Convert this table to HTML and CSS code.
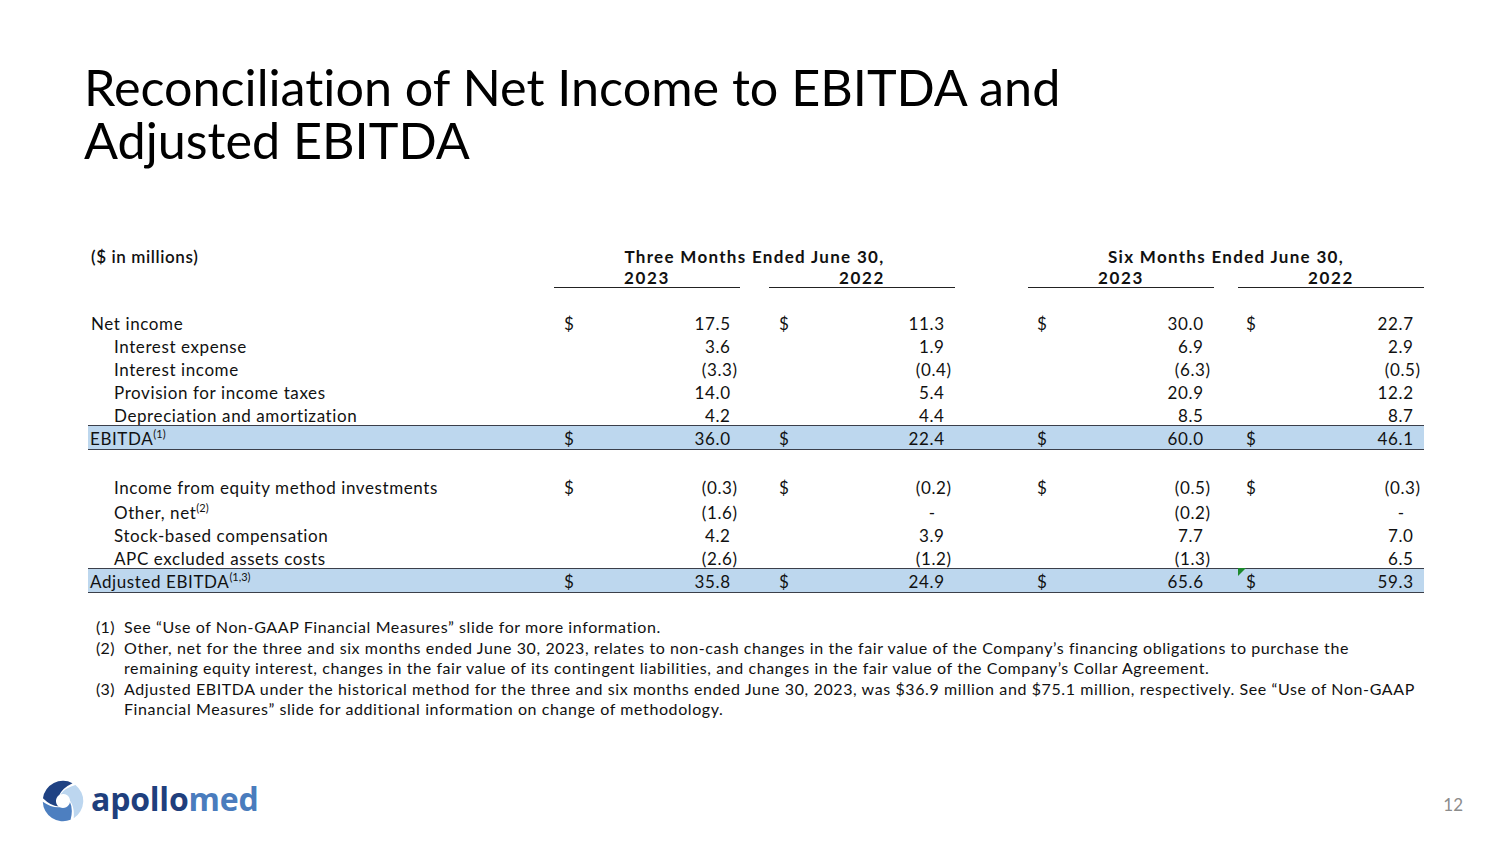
FILE: index.html
```html
<!DOCTYPE html>
<html lang="en">
<head>
<meta charset="utf-8">
<title>Reconciliation of Net Income to EBITDA and Adjusted EBITDA</title>
<link rel="stylesheet" href="styles.css">
</head>
<body>
<div class="slide">
  <h1 class="title"><span class="tline">Reconciliation of Net Income to EBITDA and</span><span class="tline">Adjusted EBITDA</span></h1>

  <div class="tbl">
    <div class="row head">
      <div class="lbl semi">($ in millions)</div>
      <div class="grp grp1">Three Months Ended June 30,</div>
      <div class="grp grp2">Six Months Ended June 30,</div>
    </div>
    <div class="row years">
      <div class="yr c1">2023</div>
      <div class="yr c2">2022</div>
      <div class="yr c3">2023</div>
      <div class="yr c4">2022</div>
    </div>

    <div class="row first">
      <div class="lbl">Net income</div>
      <div class="cell c1"><span>$</span><span class="num">17.5</span></div>
      <div class="cell c2"><span>$</span><span class="num">11.3</span></div>
      <div class="cell c3"><span>$</span><span class="num">30.0</span></div>
      <div class="cell c4"><span>$</span><span class="num">22.7</span></div>
    </div>
    <div class="row">
      <div class="lbl ind">Interest expense</div>
      <div class="cell c1"><span class="num">3.6</span></div>
      <div class="cell c2"><span class="num">1.9</span></div>
      <div class="cell c3"><span class="num">6.9</span></div>
      <div class="cell c4"><span class="num">2.9</span></div>
    </div>
    <div class="row">
      <div class="lbl ind">Interest income</div>
      <div class="cell c1"><span class="num neg">(3.3)</span></div>
      <div class="cell c2"><span class="num neg">(0.4)</span></div>
      <div class="cell c3"><span class="num neg">(6.3)</span></div>
      <div class="cell c4"><span class="num neg">(0.5)</span></div>
    </div>
    <div class="row">
      <div class="lbl ind">Provision for income taxes</div>
      <div class="cell c1"><span class="num">14.0</span></div>
      <div class="cell c2"><span class="num">5.4</span></div>
      <div class="cell c3"><span class="num">20.9</span></div>
      <div class="cell c4"><span class="num">12.2</span></div>
    </div>
    <div class="row">
      <div class="lbl ind">Depreciation and amortization</div>
      <div class="cell c1"><span class="num">4.2</span></div>
      <div class="cell c2"><span class="num">4.4</span></div>
      <div class="cell c3"><span class="num">8.5</span></div>
      <div class="cell c4"><span class="num">8.7</span></div>
    </div>
    <div class="row band">
      <div class="lbl flush">EBITDA<sup>(1)</sup></div>
      <div class="cell c1"><span>$</span><span class="num">36.0</span></div>
      <div class="cell c2"><span>$</span><span class="num">22.4</span></div>
      <div class="cell c3"><span>$</span><span class="num">60.0</span></div>
      <div class="cell c4"><span>$</span><span class="num">46.1</span></div>
    </div>

    <div class="row tall after-gap">
      <div class="lbl ind">Income from equity method investments</div>
      <div class="cell c1"><span>$</span><span class="num neg">(0.3)</span></div>
      <div class="cell c2"><span>$</span><span class="num neg">(0.2)</span></div>
      <div class="cell c3"><span>$</span><span class="num neg">(0.5)</span></div>
      <div class="cell c4"><span>$</span><span class="num neg">(0.3)</span></div>
    </div>
    <div class="row">
      <div class="lbl ind">Other, net<sup>(2)</sup></div>
      <div class="cell c1"><span class="num neg">(1.6)</span></div>
      <div class="cell c2"><span class="num dash">-</span></div>
      <div class="cell c3"><span class="num neg">(0.2)</span></div>
      <div class="cell c4"><span class="num dash">-</span></div>
    </div>
    <div class="row">
      <div class="lbl ind">Stock-based compensation</div>
      <div class="cell c1"><span class="num">4.2</span></div>
      <div class="cell c2"><span class="num">3.9</span></div>
      <div class="cell c3"><span class="num">7.7</span></div>
      <div class="cell c4"><span class="num">7.0</span></div>
    </div>
    <div class="row">
      <div class="lbl ind">APC excluded assets costs</div>
      <div class="cell c1"><span class="num neg">(2.6)</span></div>
      <div class="cell c2"><span class="num neg">(1.2)</span></div>
      <div class="cell c3"><span class="num neg">(1.3)</span></div>
      <div class="cell c4"><span class="num">6.5</span></div>
    </div>
    <div class="row band">
      <div class="lbl flush">Adjusted EBITDA<sup>(1,3)</sup></div>
      <div class="cell c1"><span>$</span><span class="num">35.8</span></div>
      <div class="cell c2"><span>$</span><span class="num">24.9</span></div>
      <div class="cell c3"><span>$</span><span class="num">65.6</span></div>
      <div class="cell c4 flagged"><span>$</span><span class="num">59.3</span><i class="flag"></i></div>
    </div>
  </div>

  <ol class="notes">
    <li><span class="n">(1)</span><span>See “Use of Non-GAAP Financial Measures” slide for more information.</span></li>
    <li><span class="n">(2)</span><span>Other, net for the three and six months ended June 30, 2023, relates to non-cash changes in the fair value of the Company’s financing obligations to purchase the remaining equity interest, changes in the fair value of its contingent liabilities, and changes in the fair value of the Company’s Collar Agreement.</span></li>
    <li><span class="n">(3)</span><span>Adjusted EBITDA under the historical method for the three and six months ended June 30, 2023, was $36.9 million and $75.1 million, respectively. See “Use of Non-GAAP Financial Measures” slide for additional information on change of methodology.</span></li>
  </ol>

  <div class="footer">
    <div class="logo">
      <svg class="mark" viewBox="0 0 100 100" width="44" height="44" aria-hidden="true">
        <g transform="rotate(-12 50 50)">
          <path fill="#1f4283" d="M6.77,34.27 A46,46 0 0 1 79.57,14.76 Q55.2,20.5 44.53,34.96 A16,16 0 0 0 37.74,60.28 Q20.5,55.2 6.77,34.27 Z"/>
          <path fill="#bcd6ef" transform="rotate(120 50 50)" d="M6.77,34.27 A46,46 0 0 1 79.57,14.76 Q55.2,20.5 44.53,34.96 A16,16 0 0 0 37.74,60.28 Q20.5,55.2 6.77,34.27 Z"/>
          <path fill="#4d7fc0" transform="rotate(240 50 50)" d="M6.77,34.27 A46,46 0 0 1 79.57,14.76 Q55.2,20.5 44.53,34.96 A16,16 0 0 0 37.74,60.28 Q20.5,55.2 6.77,34.27 Z"/>
        </g>
      </svg>
      <span class="word"><span class="apollo">apollo</span><span class="med">med</span></span>
    </div>
    <div class="pageno">12</div>
  </div>
</div>
</body>
</html>
```

FILE: styles.css
```css
html, body {
  margin: 0;
  padding: 0;
  background: #ffffff;
}

.slide {
  width: 1500px;
  height: 844px;
  position: relative;
  box-sizing: border-box;
  font-family: Lato, "Liberation Sans", sans-serif;
  font-variant-ligatures: none;
  color: #111;
  padding: 60px 0 0 0;
  overflow: hidden;
}

.title {
  margin: 0 0 0 84px;
  font-weight: 400;
  font-size: 50.3px;
  line-height: 53px;
  color: #000;
}
.tline {
  display: block;
  height: 53px;
  line-height: 53px;
}

/* ---------- table ---------- */
.tbl {
  margin: 79px 0 0 88px;
  width: 1336px;
  font-size: 17px;
  letter-spacing: 0.6px;
  color: #111;
}

.row {
  display: grid;
  grid-template-columns: 466px 186px 29px 186px 73px 186px 24px 186px;
  box-sizing: border-box;
  height: 23px;
  line-height: 18.5px;
  padding-top: 4.5px;
  align-items: start;
}

.row.head {
  font-weight: 700;
  letter-spacing: 1.3px;
  padding-top: 0;
  line-height: 23px;
}
.row.years {
  height: 20px;
  line-height: 19px;
  padding-top: 0;
  font-weight: 700;
  letter-spacing: 1.6px;
}
.row.first { margin-top: 22px; }
.row.tall { height: 25px; }
.row.after-gap { margin-top: 24px; }

.row.band {
  background: #bdd7ee;
  border-top: 1.5px solid #3b3f4a;
  border-bottom: 1.5px solid #3b3f4a;
  height: 25px;
  line-height: 21px;
  padding-top: 1.5px;
  position: relative;
}

.lbl {
  grid-column: 1;
  padding-left: 3px;
  white-space: nowrap;
}
.lbl.ind { padding-left: 26px; }
.lbl.flush { padding-left: 2px; }
.lbl.semi { font-weight: 600; letter-spacing: 0.6px; }

sup {
  font-size: 11px;
  line-height: 0;
  vertical-align: 0;
  position: relative;
  top: -7px;
  letter-spacing: 0;
}

.grp { text-align: center; white-space: nowrap; }
.grp1 { grid-column: 2 / 5; }
.grp2 { grid-column: 6 / 9; }

.yr {
  text-align: center;
  border-bottom: 1px solid #222;
  line-height: 19px;
}

.c1 { grid-column: 2; }
.c2 { grid-column: 4; }
.c3 { grid-column: 6; }
.c4 { grid-column: 8; }

.cell {
  display: flex;
  justify-content: space-between;
  padding: 0 3px 0 10px;
  white-space: nowrap;
}
.c2.cell { padding-right: 4px; }
.c3.cell { padding-left: 9px; padding-right: 4px; }
.c4.cell { padding-left: 8px; padding-right: 4px; }

.num { margin-left: auto; padding-right: 7px; margin-right: -0.6px; }
.num.neg { padding-right: 0; }
.num.dash { padding-right: 16px; }

.flagged { position: relative; }
.flag {
  position: absolute;
  left: 0;
  top: -3px;
  width: 0;
  height: 0;
  border-top: 8px solid #1e8a2e;
  border-right: 8px solid transparent;
}

/* ---------- footnotes ---------- */
.notes {
  list-style: none;
  margin: 24px 0 0 96px;
  padding: 0;
  width: 1322px;
  font-size: 16px;
  letter-spacing: 0.6px;
  line-height: 20.6px;
  color: #111;
}
.notes li {
  display: flex;
}
.notes .n {
  flex: 0 0 28px;
  letter-spacing: 0.3px;
}

/* ---------- footer ---------- */
.footer {
  position: absolute;
  left: 0;
  right: 0;
  bottom: 20px;
  height: 46px;
  display: flex;
  align-items: center;
  justify-content: space-between;
  padding: 0 37px 0 41px;
}
.logo {
  display: flex;
  align-items: center;
  gap: 6px;
}
.mark { display: block; }
.word {
  font-family: "Open Sans", "Noto Sans", sans-serif;
  font-weight: 700;
  font-size: 32px;
  letter-spacing: -0.2px;
  line-height: 1;
  padding-bottom: 4px;
}
.apollo { color: #1f3f7d; }
.med { color: #4a7cbd; }
.pageno {
  font-family: Lato, "Liberation Sans", sans-serif;
  font-size: 17px;
  color: #8c8c8c;
  padding-top: 6px;
}
```
